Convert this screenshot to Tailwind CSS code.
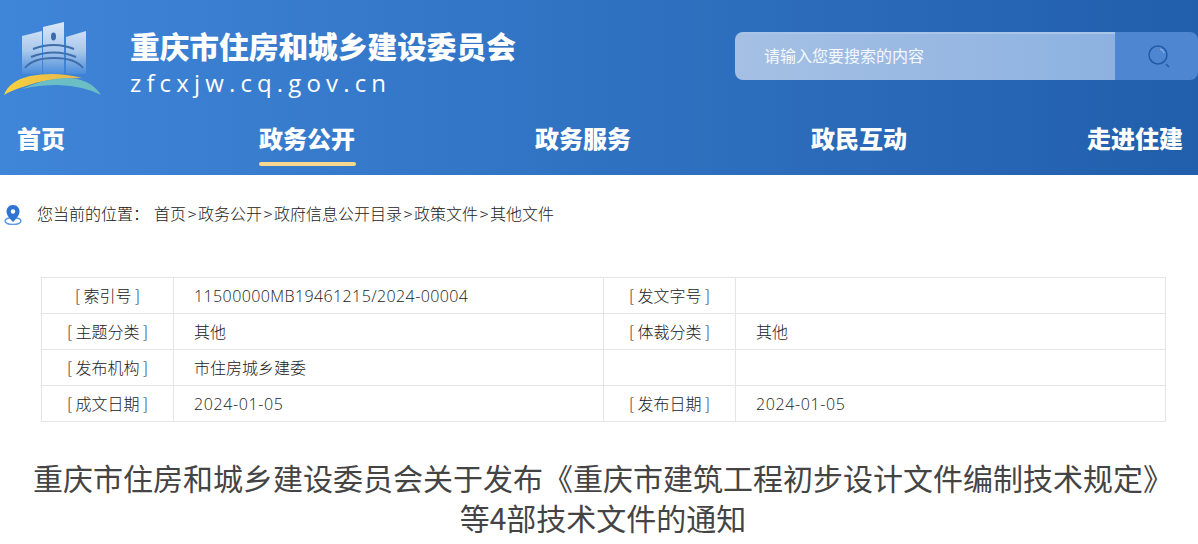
<!DOCTYPE html>
<html lang="zh-CN">

<head>
    <title>重庆市住房和城乡建设委员会</title>
    <meta charset="UTF-8">
    <meta name="viewport" content="width=device-width, initial-scale=1.0">
    <script src="https://cdn.jsdelivr.net/npm/@tailwindcss/browser@4"></script>
</head>

<body class="bg-white h-[544px] overflow-hidden font-['Noto_Sans_CJK_SC','Open_Sans',sans-serif] text-[#333]">
    <header class="h-[175px] bg-gradient-to-r from-[#3f85d8] to-[#215fac] text-white flex flex-col">
        <div class="flex h-[113px]">
            <svg class="w-[110px] h-[100px] shrink-0" viewBox="0 0 110 100">
                <defs>
                    <linearGradient id="bld" gradientUnits="userSpaceOnUse" x1="0" y1="22" x2="0" y2="74">
                        <stop offset="0" stop-color="#dce8f7" />
                        <stop offset="0.55" stop-color="#a9c8ec" />
                        <stop offset="1" stop-color="#4a8cdb" />
                    </linearGradient>
                    <linearGradient id="sun" x1="0" y1="0" x2="1" y2="0">
                        <stop offset="0" stop-color="#f8d23f" />
                        <stop offset="1" stop-color="#e6b64e" />
                    </linearGradient>
                </defs>
                <path d="M22 36 L42 31 L42 74 L22 74 Z" fill="url(#bld)" />
                <path d="M43 27 L64 22 L64 74 L43 74 Z" fill="url(#bld)" />
                <path d="M66 37 L86 31 L86 74 L66 74 Z" fill="url(#bld)" />
                <ellipse cx="53.500" cy="36.500" rx="2.500" ry="4" fill="#3a6cab" />
                <path d="M33 49 Q54 41 74 49" fill="none" stroke="#3f6eaa" stroke-width="2" />
                <path d="M31 57 Q54 48 76 57" fill="none" stroke="#3f6eaa" stroke-width="2" />
                <path d="M25 68 Q33 58 54 58 Q75 58 83 68" fill="none" stroke="#3f6eaa" stroke-width="2" />
                <path d="M4 95 Q9 81 30 76 Q56 71 82 78 Q46 78 26 86 Q12 90 4 95 Z" fill="url(#sun)" />
                <path d="M22 89 Q46 78 66 78 Q90 78 101 95 Q84 86 58 85 Q38 85 22 89 Z" fill="#6bbfc4" />
            </svg>
            <div class="ml-[20px] pt-[27px]">
                <h1 class="text-[29.700px] leading-[38px] font-black whitespace-nowrap">重庆市住房和城乡建设委员会</h1>
                <p class="text-[24px] leading-[34px] tracking-[5.150px] font-['Open_Sans',sans-serif] mt-[1px]">zfcxjw.cq.gov.cn</p>
            </div>
            <div class="ml-auto mt-[32px] w-[463px] h-[48px] flex rounded-[8px] overflow-hidden">
                <div class="w-[380px] bg-gradient-to-r from-[#a5c0e4] to-[#8db2e1] pl-[29px] text-[16px] leading-[42px] text-white/90 border-t-2 border-[#a9c6ea]">请输入您要搜索的内容</div>
                <div class="flex-1 bg-[#4f86d1] flex items-center pl-[32px]">
                    <svg class="w-[24px] h-[24px]" viewBox="0 0 24 24" fill="none" stroke="#1f5ba8">
                        <circle cx="11" cy="11" r="9" stroke-width="1.500" />
                        <path d="M19 20 L22 23" stroke-width="1.500" />
                        <path d="M13 5 A6 6 0 0 1 17 9" stroke="#8fb4e4" stroke-width="1.200" />
                    </svg>
                </div>
            </div>
        </div>
        <nav class="flex pl-[17px] text-[24px] font-black leading-[50px] h-[62px]">
            <a class="mr-[194px]">首页</a>
            <a class="relative h-[50px]">政务公开<span class="absolute left-0 right-[-1px] top-[49px] h-[4px] rounded-full bg-[#f6d88e]"></span></a>
            <a class="ml-[180px]">政务服务</a>
            <a class="ml-[180px]">政民互动</a>
            <a class="ml-[180px]">走进住建</a>
        </nav>
    </header>

    <div class="flex items-center h-[20px] mt-[28px] pl-[4px] text-[16px] leading-[20px]">
        <svg class="w-[18px] h-[20px] mt-[4px]" viewBox="0 0 18 20">
            <ellipse cx="9" cy="16" rx="8" ry="3.500" fill="none" stroke="#5b9be6" stroke-width="1.500" />
            <path d="M9 0 C4.500 0 2.500 3.500 2.500 6.500 C2.500 10.500 6.500 14.500 9 17 C11.500 14.500 15.500 10.500 15.500 6.500 C15.500 3.500 13.500 0 9 0 Z" fill="#2f74d0" />
            <circle cx="9" cy="6.500" r="2.200" fill="#fff" />
        </svg>
        <span class="ml-[15px] text-[#111] font-light w-[117px]">您当前的位置：</span>
        <span class="font-light text-[#222] flex">首页<i class="not-italic w-[12px] text-center">&gt;</i>政务公开<i class="not-italic w-[12px] text-center">&gt;</i>政府信息公开目录<i class="not-italic w-[12px] text-center">&gt;</i>政策文件<i class="not-italic w-[12px] text-center">&gt;</i>其他文件</span>
    </div>

    <table class="ml-[41px] mt-[54px] w-[1125px] table-fixed border-collapse text-[16px] font-light text-[#222] [&_td]:pb-[2px]">
        <colgroup>
            <col class="w-[132px]">
            <col class="w-[430px]">
            <col class="w-[132px]">
            <col class="w-[430px]">
        </colgroup>
        <tbody>
            <tr class="h-[36px]">
                <td class="border border-[#e5e5e5] text-center">[ 索引号 ]</td>
                <td class="border border-[#e5e5e5] pl-[20px] pb-[0px]! font-['Open_Sans','Noto_Sans_CJK_SC',sans-serif] tracking-[0.400px]">11500000MB19461215/2024-00004</td>
                <td class="border border-[#e5e5e5] text-center">[ 发文字号 ]</td>
                <td class="border border-[#e5e5e5] pl-[20px]"></td>
            </tr>
            <tr class="h-[36px]">
                <td class="border border-[#e5e5e5] text-center">[ 主题分类 ]</td>
                <td class="border border-[#e5e5e5] pl-[20px]">其他</td>
                <td class="border border-[#e5e5e5] text-center">[ 体裁分类 ]</td>
                <td class="border border-[#e5e5e5] pl-[20px]">其他</td>
            </tr>
            <tr class="h-[36px]">
                <td class="border border-[#e5e5e5] text-center">[ 发布机构 ]</td>
                <td class="border border-[#e5e5e5] pl-[20px]">市住房城乡建委</td>
                <td class="border border-[#e5e5e5] text-center"></td>
                <td class="border border-[#e5e5e5] pl-[20px]"></td>
            </tr>
            <tr class="h-[36px]">
                <td class="border border-[#e5e5e5] text-center">[ 成文日期 ]</td>
                <td class="border border-[#e5e5e5] pl-[20px] pb-[0px]! font-['Open_Sans',sans-serif] tracking-[0.600px]">2024-01-05</td>
                <td class="border border-[#e5e5e5] text-center">[ 发布日期 ]</td>
                <td class="border border-[#e5e5e5] pl-[20px] pb-[0px]! font-['Open_Sans',sans-serif] tracking-[0.600px]">2024-01-05</td>
            </tr>
        </tbody>
    </table>

    <h2 class="w-[1142px] ml-[32px] mt-[35px] text-center text-[30px] leading-[40px] font-normal text-[#444]">重庆市住房和城乡建设委员会关于发布《重庆市建筑工程初步设计文件编制技术规定》等4部技术文件的通知</h2>
</body>

</html>
